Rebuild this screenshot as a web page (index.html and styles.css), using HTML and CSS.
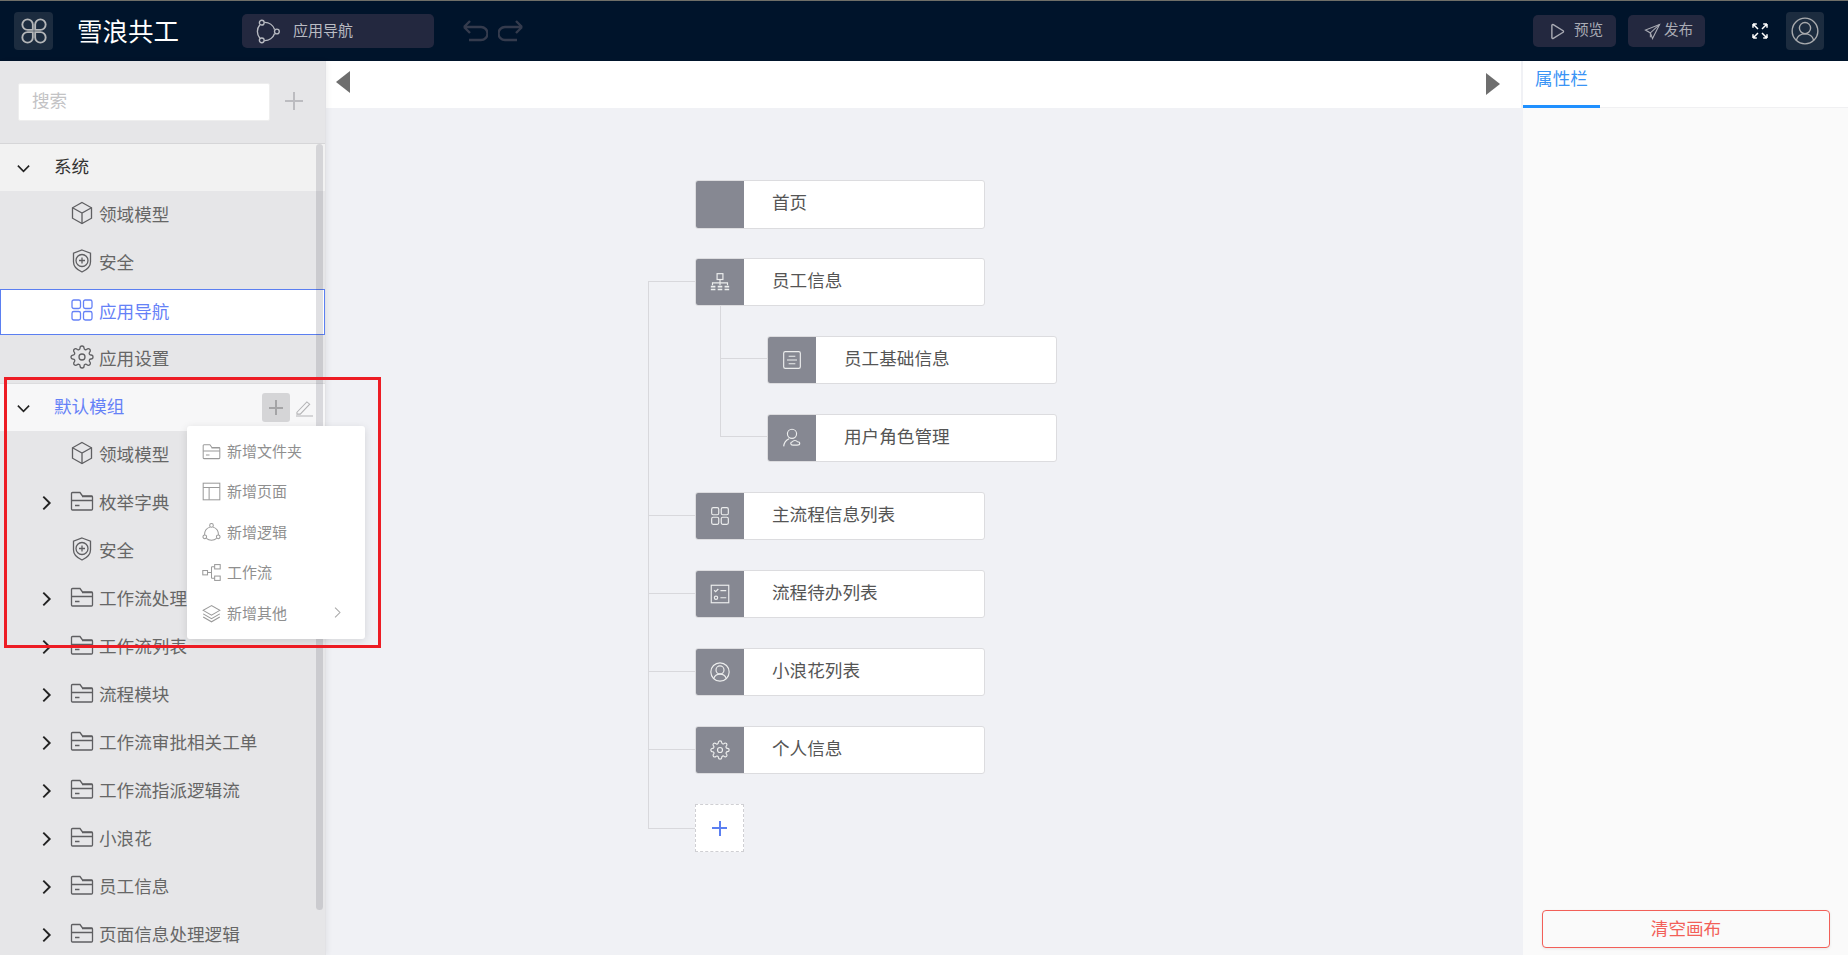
FILE: index.html
```html
<!DOCTYPE html>
<html lang="zh-CN">
<head>
<meta charset="utf-8">
<title>雪浪共工</title>
<link rel="stylesheet" href="styles.css">
</head>
<body>
<svg class="sprite" width="0" height="0" aria-hidden="true">
  <symbol id="cube" viewBox="0 0 24 24"><path d="M12 1.5l9.5 5.3v10.4L12 22.5l-9.5-5.3V6.800z"/><path d="M2.500 6.800L12 12l9.500-5.200M12 12v10.500"/></symbol>
  <symbol id="shield" viewBox="0 0 24 24"><path d="M12 1l8.500 3.200v8.800c0 4.500-3.500 7.800-8.500 10-5-2.200-8.500-5.500-8.500-10V4.200z"/><circle cx="12" cy="11.500" r="6"/><path d="M12 8.500v6M9 11.500h6"/></symbol>
  <symbol id="grid" viewBox="0 0 24 24"><rect x="2" y="2" width="8.500" height="8.500" rx="1.800"/><rect x="13.500" y="2" width="8.500" height="8.500" rx="1.800"/><rect x="2" y="13.500" width="8.500" height="8.500" rx="1.800"/><rect x="13.500" y="13.500" width="8.500" height="8.500" rx="1.800"/></symbol>
  <symbol id="gear" viewBox="0 0 24 24"><circle cx="12" cy="12" r="3"/><path d="M19.400 15a1.650 1.650 0 00.33 1.820l.06.06a2 2 0 010 2.830 2 2 0 01-2.830 0l-.06-.06a1.650 1.650 0 00-1.820-.33 1.650 1.650 0 00-1 1.510V21a2 2 0 01-2 2 2 2 0 01-2-2v-.09A1.650 1.650 0 009 19.400a1.650 1.650 0 00-1.820.33l-.06.06a2 2 0 01-2.830 0 2 2 0 010-2.830l.06-.06a1.650 1.650 0 00.33-1.820 1.650 1.650 0 00-1.510-1H3a2 2 0 01-2-2 2 2 0 012-2h.09A1.650 1.650 0 004.600 9a1.650 1.650 0 00-.33-1.820l-.06-.06a2 2 0 010-2.830 2 2 0 012.830 0l.06.06a1.650 1.650 0 001.820.33H9a1.650 1.650 0 001-1.510V3a2 2 0 012-2 2 2 0 012 2v.09a1.650 1.650 0 001 1.510 1.650 1.650 0 001.820-.33l.06-.06a2 2 0 012.830 0 2 2 0 010 2.830l-.06.06a1.650 1.650 0 00-.33 1.820V9a1.650 1.650 0 001.510 1H21a2 2 0 012 2 2 2 0 01-2 2h-.09a1.650 1.650 0 00-1.510 1z"/></symbol>
  <symbol id="folder" viewBox="0 0 24 24"><path d="M1.500 20V4.500a1 1 0 011-1h7.500l2.500 3.500h9a1 1 0 011 1V20a1 1 0 01-1 1h-19a1 1 0 01-1-1z"/><path d="M12 7.500h10.500M1.500 11.500h21M5 16.500h4.500"/></symbol>
  <symbol id="down" viewBox="0 0 16 16"><path d="M2 5l6 6 6-6"/></symbol>
  <symbol id="right" viewBox="0 0 16 16"><path d="M5 2l6 6-6 6"/></symbol>
  <symbol id="logic" viewBox="0 0 24 24"><circle cx="6.500" cy="3.500" r="2.300"/><circle cx="21" cy="12" r="2.300"/><circle cx="6.500" cy="20.500" r="2.300"/><path d="M9 3.200a10 10 0 019.800 6.800M18.800 14a10 10 0 01-9.800 6.800M4.700 18.500a10 10 0 010-13"/></symbol>
  <symbol id="logic-up" viewBox="0 0 24 24"><g transform="rotate(-90 12 12)"><circle cx="6.500" cy="3.500" r="2.300"/><circle cx="21" cy="12" r="2.300"/><circle cx="6.500" cy="20.500" r="2.300"/><path d="M9 3.200a10 10 0 019.800 6.800M18.800 14a10 10 0 01-9.800 6.800M4.700 18.500a10 10 0 010-13"/></g></symbol>
  <symbol id="layout" viewBox="0 0 24 24"><rect x="1.500" y="1.500" width="21" height="21"/><path d="M1.500 7h21M9 7v15.500"/></symbol>
  <symbol id="flow" viewBox="0 0 24 24"><rect x="1" y="9.500" width="6" height="5.500"/><rect x="16" y="2" width="7" height="5.500"/><rect x="16" y="16.500" width="7" height="5.500"/><path d="M7 12h5M12 4.800v14.400M12 4.800h4M12 19.200h4"/></symbol>
  <symbol id="layers" viewBox="0 0 24 24"><path d="M12 2L1.500 8 12 14l10.500-6z"/><path d="M1.500 12.500L12 18.500l10.500-6M1.500 16.500L12 22.500l10.500-6"/></symbol>
  <symbol id="org" viewBox="0 0 24 24"><rect x="8.500" y="2" width="7" height="7"/><path d="M12 9v4M3 16v-3h18v3M12 13v3"/><path d="M1 16.500h5.500v2H1zM1 20h5.500v2H1zM9.250 16.500h5.500v2h-5.500zM9.250 20h5.500v2h-5.500zM17.500 16.500H23v2h-5.500zM17.500 20H23v2h-5.500z" class="solid"/></symbol>
  <symbol id="doc" viewBox="0 0 24 24"><rect x="2" y="2" width="20" height="20" rx="2"/><path d="M8 7.500h8M6 12h12M8 16.500h8"/></symbol>
  <symbol id="role" viewBox="0 0 24 24"><circle cx="12" cy="7" r="5.500"/><path d="M2 22c.5-4 3-7.500 6.500-9"/><path d="M13 20.500c-3 0-3.500-3.500-.5-4 1-2 5-2 6 0 3.500 0 4 4-.5 4z"/></symbol>
  <symbol id="check" viewBox="0 0 24 24"><rect x="1.500" y="1.500" width="21" height="21"/><path d="M5 7.500l1.800 1.800L10 6M12.500 8h7M12.500 16.500h7"/><circle cx="7.200" cy="16.500" r="2"/></symbol>
  <symbol id="user" viewBox="0 0 24 24"><circle cx="12" cy="12" r="11"/><circle cx="12" cy="9.500" r="4.800"/><path d="M4.500 20c1-3.500 4-5.500 7.500-5.500s6.500 2 7.500 5.500"/></symbol>
</svg>

<div class="app">
  <header class="topbar">
    <div class="logo-box">
      <svg class="logo" viewBox="0 0 24 24"><path d="M11 11H6.500A4.500 4.500 0 1111 6.500zM13 11V6.500A4.500 4.500 0 1117.500 11zM11 13v4.500A4.500 4.500 0 116.500 13zM13 13h4.500A4.500 4.500 0 1113 17.500z"/></svg>
    </div>
    <div class="brand">雪浪共工</div>
    <div class="nav-select">
      <svg class="nav-ic"><use href="#logic"/></svg>
      <span>应用导航</span>
    </div>
    <div class="history">
      <svg class="hist-ic" viewBox="0 0 25 22"><path d="M1 7h17a6.500 6.500 0 010 13H6M1 7l6-6M1 7l6 6"/></svg>
      <svg class="hist-ic" viewBox="0 0 25 22"><path d="M24 7H7a6.500 6.500 0 000 13h12M24 7l-6-6M24 7l-6 6"/></svg>
    </div>
    <div class="top-actions">
      <button class="dark-btn preview"><svg viewBox="0 0 16 18"><path d="M2 2.500v13a1 1 0 001.500.8l10.500-6.500a1 1 0 000-1.600L3.500 1.700A1 1 0 002 2.500z"/></svg><span>预览</span></button>
      <button class="dark-btn publish"><svg viewBox="0 0 24 24"><path d="M22 2L2 10l7 4 3 8z"/><path d="M22 2L9 14v6"/></svg><span>发布</span></button>
      <svg class="fullscreen" viewBox="0 0 16 16"><path d="M1 1l5 5M1 1v3.800M1 1h3.800M15 1l-5 5M15 1v3.800M15 1h-3.800M1 15l5-5M1 15v-3.800M1 15h3.800M15 15l-5-5M15 15v-3.800M15 15h-3.800"/></svg>
      <div class="avatar-box"><svg class="avatar"><use href="#user"/></svg></div>
    </div>
  </header>

  <div class="main">
    <aside class="sidebar">
      <div class="search-area">
        <input class="search" type="text" placeholder="搜索">
        <span class="search-plus"></span>
      </div>
      <div class="tree">
        <div class="group"><svg class="chev-down"><use href="#down"/></svg><span>系统</span></div>
        <div class="row"><svg class="ic"><use href="#cube"/></svg>领域模型</div>
        <div class="row"><svg class="ic"><use href="#shield"/></svg>安全</div>
        <div class="row selected"><svg class="ic"><use href="#grid"/></svg>应用导航</div>
        <div class="row"><svg class="ic"><use href="#gear"/></svg>应用设置</div>
        <div class="group active">
          <svg class="chev-down"><use href="#down"/></svg><span>默认模组</span>
          <div class="group-tools">
            <span class="tool-plus"></span>
            <svg class="pencil" viewBox="0 0 18 18"><path d="M1 13.500L11.500 2.500l3 2.500L4.500 15.500H1zM0 17.500h18"/></svg>
          </div>
        </div>
        <div class="row"><svg class="ic"><use href="#cube"/></svg>领域模型</div>
        <div class="row"><svg class="chev-right"><use href="#right"/></svg><svg class="ic"><use href="#folder"/></svg>枚举字典</div>
        <div class="row"><svg class="ic"><use href="#shield"/></svg>安全</div>
        <div class="row"><svg class="chev-right"><use href="#right"/></svg><svg class="ic"><use href="#folder"/></svg>工作流处理</div>
        <div class="row"><svg class="chev-right"><use href="#right"/></svg><svg class="ic"><use href="#folder"/></svg>工作流列表</div>
        <div class="row"><svg class="chev-right"><use href="#right"/></svg><svg class="ic"><use href="#folder"/></svg>流程模块</div>
        <div class="row"><svg class="chev-right"><use href="#right"/></svg><svg class="ic"><use href="#folder"/></svg>工作流审批相关工单</div>
        <div class="row"><svg class="chev-right"><use href="#right"/></svg><svg class="ic"><use href="#folder"/></svg>工作流指派逻辑流</div>
        <div class="row"><svg class="chev-right"><use href="#right"/></svg><svg class="ic"><use href="#folder"/></svg>小浪花</div>
        <div class="row"><svg class="chev-right"><use href="#right"/></svg><svg class="ic"><use href="#folder"/></svg>员工信息</div>
        <div class="row"><svg class="chev-right"><use href="#right"/></svg><svg class="ic"><use href="#folder"/></svg>页面信息处理逻辑</div>
        <div class="scroll-thumb"></div>
      </div>
    </aside>

    <section class="center">
      <div class="toolbar">
        <span class="tri-left"></span>
        <span class="tri-right"></span>
      </div>
      <div class="canvas">
        <div class="node home"><div class="node-ic"></div><div class="node-label">首页</div></div>
        <div class="branch trunk">
          <div class="item">
            <div class="node"><div class="node-ic"><svg><use href="#org"/></svg></div><div class="node-label">员工信息</div></div>
            <div class="branch sub">
              <div class="item"><div class="node"><div class="node-ic"><svg><use href="#doc"/></svg></div><div class="node-label">员工基础信息</div></div></div>
              <div class="item"><div class="node"><div class="node-ic"><svg><use href="#role"/></svg></div><div class="node-label">用户角色管理</div></div></div>
            </div>
          </div>
          <div class="item"><div class="node"><div class="node-ic"><svg><use href="#grid"/></svg></div><div class="node-label">主流程信息列表</div></div></div>
          <div class="item"><div class="node"><div class="node-ic"><svg><use href="#check"/></svg></div><div class="node-label">流程待办列表</div></div></div>
          <div class="item"><div class="node"><div class="node-ic"><svg><use href="#user"/></svg></div><div class="node-label">小浪花列表</div></div></div>
          <div class="item"><div class="node"><div class="node-ic"><svg><use href="#gear"/></svg></div><div class="node-label">个人信息</div></div></div>
          <div class="item"><div class="add-node"><span class="add-plus"></span></div></div>
        </div>
      </div>
    </section>

    <aside class="panel">
      <div class="tabs"><div class="tab">属性栏</div></div>
      <div class="panel-body"></div>
      <div class="panel-foot"><button class="clear-btn">清空画布</button></div>
    </aside>

    <div class="menu">
      <div class="menu-item"><svg class="menu-ic"><use href="#folder"/></svg>新增文件夹</div>
      <div class="menu-item"><svg class="menu-ic"><use href="#layout"/></svg>新增页面</div>
      <div class="menu-item"><svg class="menu-ic"><use href="#logic-up"/></svg>新增逻辑</div>
      <div class="menu-item"><svg class="menu-ic"><use href="#flow"/></svg>工作流</div>
      <div class="menu-item"><svg class="menu-ic"><use href="#layers"/></svg>新增其他<svg class="menu-more"><use href="#right"/></svg></div>
    </div>
    <div class="annotation"></div>
  </div>
</div>
</body>
</html>
```

FILE: styles.css
```css
* { box-sizing: border-box; }
html, body { margin: 0; height: 100%; overflow: hidden; }
body {
  font-family: "Noto Sans CJK SC", "Liberation Sans", sans-serif;
  font-size: 17.6px;
  color: #555;
  background: #f0f1f5;
}
.sprite { position: absolute; }
svg { fill: none; stroke: currentColor; stroke-width: 1.5; display: block; flex: none; }
.solid { fill: currentColor; stroke: none; }

.app { height: 955px; display: flex; flex-direction: column; }

/* top bar */
.topbar {
  height: 61px;
  flex: none;
  display: flex;
  align-items: center;
  background: #00142b;
  border-top: 1px solid #6f6f68;
  padding-left: 14px;
}
.logo-box {
  width: 39px; height: 38px;
  background: #1c2c3f;
  border-radius: 4px;
  display: flex; align-items: center; justify-content: center;
}
.logo { width: 28px; height: 28px; color: #b4b6b8; stroke-width: 1.600; }
.brand { margin-left: 24px; width: 164px; font-size: 25.5px; color: #fff; line-height: 1; padding-bottom: 2px; }
.nav-select {
  width: 192px; height: 34px;
  margin-left: 1px;
  background: #23283f;
  border-radius: 5px;
  display: flex; align-items: center;
  color: #b9bbc2;
  font-size: 15px;
  padding-left: 13px;
}
.nav-select span { padding-bottom: 4px; line-height: 1; }
.nav-ic { width: 25px; height: 25px; margin-right: 13px; color: #b9bbc2; stroke-width: 1.3; }
.history { display: flex; gap: 10px; margin-left: 29px; color: #343b4d; }
.hist-ic { width: 25px; height: 22px; stroke-width: 2.400; }
.top-actions { margin-left: auto; display: flex; align-items: center; padding-right: 24px; }
.dark-btn {
  height: 32px;
  border: 0;
  border-radius: 5px;
  background: #23283f;
  color: #a9abb4;
  font: inherit;
  font-size: 14.6px;
  display: flex; align-items: center;
  padding: 0;
}
.dark-btn span { padding-bottom: 4px; line-height: 1; }
.preview { width: 83px; padding-left: 17px; gap: 9px; }
.preview svg { width: 15px; height: 17px; }
.publish { width: 77px; margin-left: 12px; padding-left: 16px; gap: 3px; }
.publish svg { width: 17px; height: 17px; }
.fullscreen { width: 16px; height: 16px; margin-left: 47px; color: #fff; stroke-width: 1.5; }
.avatar-box {
  width: 38px; height: 38px;
  margin-left: 18px;
  background: #1c2c3f;
  border-radius: 4px;
  display: flex; align-items: center; justify-content: center;
}
.avatar { width: 28px; height: 28px; color: #a9abae; stroke-width: 1.2; }

/* layout */
.main { flex: 1; display: flex; position: relative; min-height: 0; }

/* sidebar */
.sidebar {
  width: 326px; flex: none;
  background: #e6e6e8;
  box-shadow: 2px 0 5px rgba(0, 0, 0, .05);
  border-right: 1px solid #e2e2e5;
  display: flex; flex-direction: column;
  position: relative; z-index: 1;
}
.search-area {
  height: 82px; flex: none;
  padding: 22px 0 0 18px;
  display: flex; align-items: flex-start;
}
.search {
  width: 252px; height: 38px;
  background: #fff;
  border: 1px solid #eee;
  border-radius: 2px;
  padding: 0 13px 5px;
  font: inherit;
  outline: 0;
}
.search::placeholder { color: #c3c3c5; }
.search-plus, .tool-plus, .add-plus { position: relative; display: block; flex: none; }
.search-plus { width: 18px; height: 18px; margin: 9px 0 0 15px; }
.search-plus::before, .tool-plus::before, .add-plus::before {
  content: ""; position: absolute; left: 0; right: 0; top: 50%; height: 2px; margin-top: -1px; background: currentColor;
}
.search-plus::after, .tool-plus::after, .add-plus::after {
  content: ""; position: absolute; top: 0; bottom: 0; left: 50%; width: 2px; margin-left: -1px; background: currentColor;
}
.search-plus { color: #bcbcc0; }
.tree { flex: 1; min-height: 0; overflow: hidden; position: relative; }
.group {
  height: 48px;
  display: flex; align-items: center;
  background: #f2f2f2;
  border-top: 1px solid #d6d6d8;
  color: #333;
  padding: 0 0 4px 16px;
}
.group > span { margin-left: 23px; }
.group.active { background: #f7f7f8; color: #6581f7; border-top: 1px solid #dcdcde; position: relative; }
.chev-down { width: 15px; height: 15px; color: #222; stroke-width: 1.700; margin-top: 5px; }
.group-tools { margin-left: auto; display: flex; align-items: center; padding-right: 12px; margin-top: 4px; }
.tool-plus {
  width: 28px; height: 29px;
  border-radius: 3px;
  background: #d5d5d7;
  color: #a4a4a6;
}
.tool-plus::before { left: 7px; right: 7px; }
.tool-plus::after { top: 7px; bottom: 7px; }
.pencil { width: 17px; height: 18px; margin-left: 6px; color: #b3b3b5; stroke-width: 1.1; }
.row {
  height: 48px;
  display: flex; align-items: center;
  padding: 0 0 4px 70px;
  position: relative;
  color: #666;
}
.row .ic { width: 24px; height: 24px; margin-right: 5px; color: #5f5f62; stroke-width: 1.300; }
.chev-right { position: absolute; left: 38px; top: 15px; width: 17px; height: 18px; color: #222; stroke-width: 1.800; }
.row.selected {
  height: 46px;
  margin-top: 2px;
  background: #fff;
  border: 1px solid #5b7ff1;
  padding: 0 0 4px 69px;
  color: #6581f7;
}
.row.selected .ic { color: #6581f7; }
.scroll-thumb {
  position: absolute;
  left: 316px; top: 1px;
  width: 7px; height: 766px;
  border-radius: 4px;
  background: rgba(60, 60, 80, .16);
}

/* center */
.center { flex: 1; min-width: 0; display: flex; flex-direction: column; }
.toolbar {
  height: 47px; flex: none;
  background: #fff;
  display: flex; justify-content: space-between;
  padding: 10px 21px 0 10px;
}
.tri-left, .tri-right { width: 0; height: 0; border-top: 11px solid transparent; border-bottom: 11px solid transparent; }
.tri-left { border-right: 14px solid #6e6e6e; }
.tri-right { border-left: 14px solid #6e6e6e; margin-top: 2px; }
.canvas { flex: 1; padding: 72px 0 0 369px; }
.node {
  width: 290px; height: 48px;
  background: #fff;
  border: 1px solid #dcdcdf;
  border-radius: 3px;
  display: flex;
  overflow: hidden;
}
.home { height: 49px; }
.node-ic {
  width: 49px; flex: none;
  background: #868892;
  display: flex; align-items: center; justify-content: center;
  color: #eceded;
  margin: -1px 0 -1px -1px;
}
.node-ic svg { width: 20px; height: 20px; stroke-width: 1.400; }
.node-label { margin-left: 28px; line-height: 42px; color: #555; }

.branch { position: relative; }
.branch::before { content: ""; position: absolute; left: -47px; width: 1px; background: #d8d8dc; }
.trunk { margin-top: 29px; }
.trunk::before { top: 23px; bottom: 23px; }
.sub { margin-left: 72px; }
.sub::before { top: -30px; bottom: 25px; }
.item { position: relative; margin-bottom: 30px; }
.item:last-child { margin-bottom: 0; }
.item::before {
  content: ""; position: absolute; left: -47px; top: 23px;
  width: 47px; height: 1px; background: #d8d8dc;
}
.branch .sub { margin-top: 30px; }
.add-node {
  width: 49px; height: 48px;
  background: #fff;
  border: 1px dashed #cfcfd3;
  display: flex; align-items: center; justify-content: center;
  color: #5b7ff1;
}
.add-plus { width: 15px; height: 15px; }
.item:last-child::before { top: 24px; }
.sub .item::before { top: 22px; }

/* panel */
.panel {
  width: 327px; flex: none;
  background: #fafafa;
  border-left: 2px solid #f0f1f5;
  display: flex; flex-direction: column;
}
.tabs { height: 47px; flex: none; background: #fff; border-bottom: 1px solid #f0f0f2; }
.tab {
  width: 77px; height: 47px;
  text-align: center;
  color: #3a94f5;
  border-bottom: 3px solid #1f90ff;
  padding-top: 2px;
  line-height: 30px;
}
.panel-body { flex: 1; }
.panel-foot { padding: 0 18px 7px 19px; }
.clear-btn {
  width: 288px; height: 38px;
  background: #fafafa;
  border: 1px solid #f25f58;
  border-radius: 4px;
  color: #f25f58;
  font: inherit;
  padding: 0 0 3px;
  box-shadow: 0 1px 3px rgba(0, 0, 0, .08);
}

/* dropdown */
.menu {
  position: absolute;
  left: 187px; top: 365px;
  width: 178px; height: 213px;
  z-index: 3;
  background: #fff;
  border-radius: 3px;
  box-shadow: 0 2px 8px rgba(0, 0, 0, .12);
  padding: 4px 0;
  color: #8f8f8f;
  font-size: 15px;
}
.menu-item { height: 40.5px; display: flex; align-items: center; padding-left: 15px; position: relative; }
.menu-ic { width: 19px; height: 19px; margin-right: 6px; color: #9a9a9a; stroke-width: 1.300; margin-top: 2px; }
.menu-more { width: 13px; height: 13px; margin-left: auto; margin-right: 21px; color: #a8a8a8; stroke-width: 1.300; }

/* red annotation */
.annotation {
  position: absolute;
  left: 4px; top: 316px;
  width: 377px; height: 271px;
  border: 3px solid #ed1c24;
  z-index: 4;
  pointer-events: none;
}
```
